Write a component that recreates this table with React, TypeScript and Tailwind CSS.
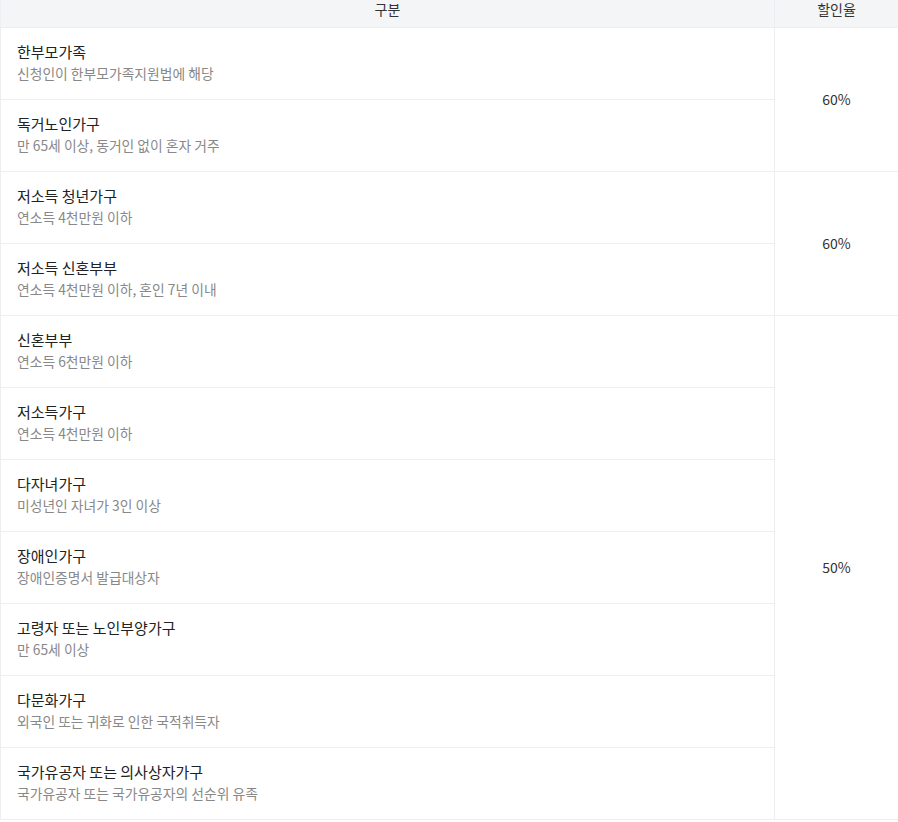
import React from "react";

type Item = { title: string; desc: string };

const groups: { rate: string; span: string; items: Item[] }[] = [
  {
    rate: "60%",
    span: "row-span-2",
    items: [
      { title: "한부모가족", desc: "신청인이 한부모가족지원법에 해당" },
      { title: "독거노인가구", desc: "만 65세 이상, 동거인 없이 혼자 거주" },
    ],
  },
  {
    rate: "60%",
    span: "row-span-2",
    items: [
      { title: "저소득 청년가구", desc: "연소득 4천만원 이하" },
      { title: "저소득 신혼부부", desc: "연소득 4천만원 이하, 혼인 7년 이내" },
    ],
  },
  {
    rate: "50%",
    span: "row-span-7",
    items: [
      { title: "신혼부부", desc: "연소득 6천만원 이하" },
      { title: "저소득가구", desc: "연소득 4천만원 이하" },
      { title: "다자녀가구", desc: "미성년인 자녀가 3인 이상" },
      { title: "장애인가구", desc: "장애인증명서 발급대상자" },
      { title: "고령자 또는 노인부양가구", desc: "만 65세 이상" },
      { title: "다문화가구", desc: "외국인 또는 귀화로 인한 국적취득자" },
      { title: "국가유공자 또는 의사상자가구", desc: "국가유공자 또는 국가유공자의 선순위 유족" },
    ],
  },
];

export default function App() {
  let row = 2;
  return (
    <div
      className="w-[898px] h-[822px] bg-white overflow-hidden text-[#333]"
      style={{ fontFamily: '"Noto Sans CJK KR", "Noto Sans", sans-serif' }}
    >
      <div className="grid grid-cols-[773px_1fr] grid-rows-[28px_repeat(11,72px)] border-l border-[#eceef1]">
        <div className="bg-[#f4f5f7] border-b border-[#eceef1] text-center text-[14px] leading-[18px]">구분</div>
        <div className="bg-[#f4f5f7] border-b border-l border-[#eceef1] text-center text-[14px] leading-[18px]">할인율</div>
        {groups.map((g, gi) => {
          const start = row;
          row += g.items.length;
          return (
            <React.Fragment key={gi}>
              {g.items.map((it, i) => (
                <div
                  key={it.title}
                  className="col-start-1 flex flex-col justify-center px-4 pb-[4px] border-b border-[#eceef1]"
                  style={{ gridRowStart: start + i }}
                >
                  <div className="text-[15px] leading-[22px] text-[#222]">{it.title}</div>
                  <div className="text-[13.8px] leading-[20px] text-[#888]">{it.desc}</div>
                </div>
              ))}
              <div
                className={`col-start-2 ${g.span} flex items-center justify-center border-b border-l border-[#eceef1] text-[14px] text-[#333]`}
                style={{ gridRowStart: start }}
              >
                {g.rate}
              </div>
            </React.Fragment>
          );
        })}
      </div>
    </div>
  );
}
